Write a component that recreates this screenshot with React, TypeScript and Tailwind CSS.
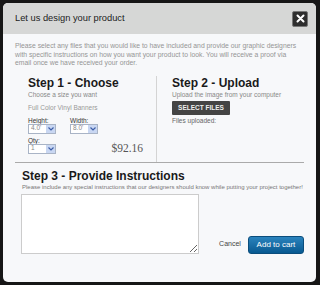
import { useState } from 'react'

function FakeSelect({ value, width = 'w-[28px]' }: { value: string; width?: string }) {
  return (
    <div className={`flex h-[10px] ${width} items-center border border-[#a9b4c6] bg-white`}>
      <span className="flex-1 pl-[2px] text-[6.5px] leading-none text-[#888]">{value}</span>
      <span className="flex h-full w-[9px] items-center justify-center bg-[#c9d7f2]">
        <svg width="6" height="4" viewBox="0 0 6 4">
          <path d="M0.5 0.5 L3 3 L5.5 0.5" stroke="#3d5ea8" strokeWidth="1.2" fill="none" />
        </svg>
      </span>
    </div>
  )
}

export default function App() {
  const [notes, setNotes] = useState('')

  return (
    <div
      className="h-[285px] w-[320px] overflow-hidden bg-[#161616] pl-[3px] pt-[3px]"
      style={{ fontFamily: '"Liberation Sans", Arial, sans-serif' }}
    >
      <div className="flex h-[279px] w-[313px] flex-col overflow-hidden rounded-[5px] bg-[#f7f8fa]">
        {/* Header */}
        <div className="flex h-[31px] items-center justify-between bg-[#d6d7d6] pl-[12px] pr-[8px]">
          <h1 className="text-[9.3px] text-[#222]">Let us design your product</h1>
          <button className="flex h-[16px] w-[16px] items-center justify-center rounded-[2px] border border-[#777] bg-[#2e2e2e]">
            <svg width="9" height="9" viewBox="0 0 9 9">
              <path d="M1.5 1.5 L7.5 7.5 M7.5 1.5 L1.5 7.5" stroke="#fff" strokeWidth="2" strokeLinecap="round" />
            </svg>
          </button>
        </div>

        <div className="flex flex-1 flex-col px-[12px] pt-[8px]">
          <p className="text-[6.8px] leading-[8.5px] text-[#959595]">
            Please select any files that you would like to have included and provide our graphic designers with
            specific instructions on how you want your product to look. You will receive a proof via email once we
            have received your order.
          </p>

          {/* Steps 1 & 2 */}
          <div className="mt-[8px] flex h-[87px] border-b border-[#aaa]">
            <div className="flex w-[142px] flex-col border-r border-[#d4d4d4] pl-[13px] pr-[13px]">
              <h2 className="text-[12px] font-bold leading-[14px] text-[#1a1a1a]">Step 1 - Choose</h2>
              <p className="mt-[1px] text-[6.5px] leading-[8px] text-[#888]">Choose a size you want</p>
              <p className="mt-[5px] text-[6.5px] leading-[8px] text-[#999]">Full Color Vinyl Banners</p>
              <div className="mt-[5px] flex gap-[14px]">
                <div className="flex flex-col">
                  <span className="text-[6.5px] leading-[7px] text-[#333]">Height:</span>
                  <FakeSelect value="4.0'" />
                </div>
                <div className="flex flex-col">
                  <span className="text-[6.5px] leading-[7px] text-[#333]">Width:</span>
                  <FakeSelect value="8.0'" />
                </div>
              </div>
              <div className="mt-[3px] flex items-end justify-between">
                <div className="flex flex-col">
                  <span className="text-[6.5px] leading-[7px] text-[#333]">Qty:</span>
                  <FakeSelect value="1" />
                </div>
                <span
                  className="text-[11.5px] leading-[12px] text-[#555]"
                  style={{ fontFamily: '"Liberation Serif", serif' }}
                >
                  $92.16
                </span>
              </div>
            </div>

            <div className="flex flex-1 flex-col pl-[15px]">
              <h2 className="text-[12px] font-bold leading-[14px] text-[#1a1a1a]">Step 2 - Upload</h2>
              <p className="mt-[1px] text-[6.5px] leading-[8px] text-[#888]">Upload the image from your computer</p>
              <button className="mt-[2px] flex h-[14px] w-[58px] items-center justify-center rounded-[1px] bg-[#444] text-[6.5px] font-bold text-[#eee]">
                SELECT FILES
              </button>
              <p className="mt-[2px] text-[6.5px] leading-[8px] text-[#666]">Files uploaded:</p>
            </div>
          </div>

          {/* Step 3 */}
          <div className="flex flex-col pl-[7px]">
            <h2 className="mt-[6px] text-[12px] font-bold leading-[14px] text-[#1a1a1a]">Step 3 - Provide Instructions</h2>
            <p className="mt-[1px] whitespace-nowrap text-[6px] leading-[7px] text-[#777]">
              Please include any special instructions that our designers should know while putting your project together!
            </p>
            <div className="mt-[3px] flex items-end">
              <textarea
                value={notes}
                onChange={(e) => setNotes(e.target.value)}
                className="h-[60px] w-[181px] -ml-[1px] resize border border-[#ccc] bg-white"
              />
              <span className="mb-[4px] ml-[20px] text-[7px] text-[#444]">Cancel</span>
              <button className="ml-[7px] h-[18px] w-[57px] rounded-[3px] border border-[#0b4d7c] bg-gradient-to-b from-[#2a83bd] to-[#075a91] text-[8px] text-white">
                Add to cart
              </button>
            </div>
          </div>
        </div>
      </div>
    </div>
  )
}
